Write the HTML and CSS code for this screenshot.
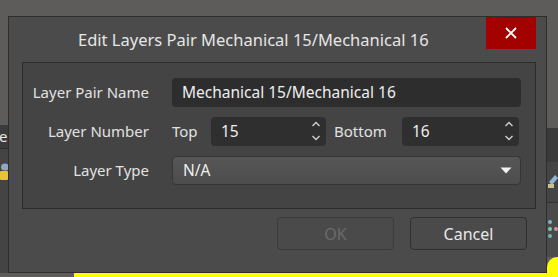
FILE: index.html
```html
<!DOCTYPE html>
<html lang="en">
<head>
    <meta charset="UTF-8">
    <meta name="viewport" content="width=device-width, initial-scale=1.0">
    <title>Edit Layers Pair</title>
    <link rel="stylesheet" href="styles.css">
</head>
<body>

    <div class="scene">
        <!-- Background app, left edge -->
        <div class="side side-left">
            <div class="side-tab">e</div>
            <div class="side-icon">
                <svg width="8" height="18" viewBox="0 0 8 18">
                    <ellipse cx="5" cy="4" rx="4" ry="3.5" fill="#8fa6bd"/>
                    <rect x="0" y="8" width="8" height="9" rx="1" fill="#e8c33a"/>
                </svg>
            </div>
        </div>

        <!-- Dialog -->
        <div class="dialog">
            <div class="titlebar">
                <span class="title">Edit Layers Pair Mechanical 15/Mechanical 16</span>
                <button type="button" class="close-btn" aria-label="Close">
                    <svg width="12" height="12" viewBox="0 0 12 12">
                        <path d="M1 1 L11 11 M11 1 L1 11" stroke="#fff" stroke-width="1.8"/>
                    </svg>
                </button>
            </div>

            <div class="group">
                <div class="row">
                    <label class="label">Layer Pair Name</label>
                    <div class="field wide">Mechanical 15/Mechanical 16</div>
                </div>

                <div class="row">
                    <label class="label">Layer Number</label>
                    <span class="sublabel sub-top">Top</span>
                    <div class="field spin spin-top">
                        <span>15</span>
                        <span class="arrows">
                            <svg width="10" height="22" viewBox="0 0 10 22">
                                <path d="M1.5 6 L5 2.5 L8.5 6 M1.5 16 L5 19.5 L8.5 16" fill="none" stroke="#cfcfcf" stroke-width="1.4"/>
                            </svg>
                        </span>
                    </div>
                    <span class="sublabel sub-bottom">Bottom</span>
                    <div class="field spin spin-bottom">
                        <span>16</span>
                        <span class="arrows">
                            <svg width="10" height="22" viewBox="0 0 10 22">
                                <path d="M1.5 6 L5 2.5 L8.5 6 M1.5 16 L5 19.5 L8.5 16" fill="none" stroke="#cfcfcf" stroke-width="1.4"/>
                            </svg>
                        </span>
                    </div>
                </div>

                <div class="row">
                    <label class="label">Layer Type</label>
                    <div class="field combo wide">
                        <span>N/A</span>
                        <svg width="12" height="7" viewBox="0 0 12 7">
                            <path d="M0.5 0.5 L11.5 0.5 L6 6.5 Z" fill="#f2f2f2"/>
                        </svg>
                    </div>
                </div>
            </div>

            <div class="buttons">
                <button type="button" class="btn" disabled>OK</button>
                <button type="button" class="btn">Cancel</button>
            </div>
        </div>

        <!-- Background app, right edge -->
        <div class="side side-right">
            <div class="side-dark"></div>
            <div class="side-tool">
                <svg width="11" height="16" viewBox="0 0 11 16">
                    <path d="M2 9 L8 2 L11 5 L5 12 Z" fill="#8fb3d6"/>
                    <rect x="1" y="11" width="6" height="4" fill="#c9c28a"/>
                </svg>
            </div>
            <div class="side-dots">
                <svg width="11" height="22" viewBox="0 0 11 22">
                    <circle cx="3" cy="4" r="2" fill="#7fb8c9"/>
                    <circle cx="3" cy="11" r="2" fill="#7fc9b0"/>
                    <circle cx="3" cy="18" r="2" fill="#6fb5a8"/>
                    <circle cx="9" cy="11" r="2" fill="#d48fa8"/>
                </svg>
            </div>
            <div class="side-yellow"></div>
        </div>

        <div class="bottom-strip"></div>
    </div>

</body>
</html>
```

FILE: styles.css
```css
* {
    box-sizing: border-box;
    font-family: "Noto Sans", "Open Sans", sans-serif;
}

body {
    margin: 0;
    background: #5d5c5b;
    width: 558px;
    height: 277px;
    overflow: hidden;
}

.scene {
    display: grid;
    grid-template-columns: 8px 539px 11px;
    grid-template-rows: 16px 257px 4px;
    height: 277px;
}

/* background app edges */
.side {
    grid-row: 1 / 3;
    display: flex;
    flex-direction: column;
}

.side-left {
    grid-column: 1;
    padding-top: 125px;
}

.side-tab {
    height: 24px;
    background: #3b3b3b;
    border-bottom: 1px solid #2c2c2c;
    color: #e8e8e8;
    font-size: 15px;
    line-height: 22px;
    overflow: hidden;
    text-indent: -1px;
}

.side-icon {
    flex: 1;
    background: #444;
    padding-top: 14px;
}

.side-right {
    grid-column: 3;
    padding-top: 128px;
}

.side-dark {
    height: 34px;
    background: #3a3a3a;
}

.side-tool {
    height: 41px;
    background: #444;
    padding-top: 10px;
    border-bottom: 1px solid #333;
}

.side-dots {
    flex: 1;
    background: #4a4a4a;
    padding-top: 15px;
}

.side-yellow {
    height: 16px;
    background: #ffff00;
    border-top-left-radius: 10px;
}

.bottom-strip {
    grid-column: 1 / 4;
    grid-row: 3;
    background: linear-gradient(to right, #5d5c5b 74px, #ffff00 74px);
}

/* dialog */
.dialog {
    grid-column: 2;
    grid-row: 2;
    background: #4b4b4b;
    border: 1px solid #2e2e2e;
    display: flex;
    flex-direction: column;
    padding: 0 10px 0 13px;
}

.titlebar {
    height: 45px;
    display: flex;
    align-items: flex-start;
    position: relative;
}

.title {
    flex: 1;
    color: #e6e6e6;
    font-size: 16.5px;
    line-height: 20px;
    padding-top: 13px;
    padding-left: 56px;
    white-space: nowrap;
}

.close-btn {
    position: absolute;
    right: 0;
    top: 0;
    width: 50px;
    height: 32px;
    background: #a30000;
    border: none;
    display: flex;
    align-items: center;
    justify-content: center;
    padding: 0;
}

.group {
    background: #444;
    border: 1px solid #2c2c2c;
    height: 147px;
    padding: 14px 14px 0 9px;
    display: flex;
    flex-direction: column;
    gap: 9px;
}

.row {
    display: flex;
    align-items: center;
    height: 30px;
}

.label {
    width: 117px;
    margin-right: 23px;
    text-align: right;
    color: #e2e2e2;
    font-size: 15px;
    white-space: nowrap;
}

.sublabel {
    color: #e2e2e2;
    font-size: 15px;
}

.sub-top {
    width: 39px;
}

.sub-bottom {
    margin-left: 8px;
    width: 68px;
}

.field {
    height: 29px;
    background: #2d2d2d;
    border-radius: 4px;
    color: #eeeeee;
    font-size: 15.5px;
    display: flex;
    align-items: center;
    padding-left: 10px;
}

.wide {
    flex: 1;
}

.spin {
    justify-content: space-between;
    padding-right: 5px;
    background: #2f2f2f;
}

.spin-top {
    width: 115px;
}

.spin-bottom {
    width: 117px;
}

.arrows {
    display: flex;
}

.combo {
    background: linear-gradient(#565656, #4d4d4d);
    border: 1px solid #363636;
    justify-content: space-between;
    padding-right: 8px;
}

.buttons {
    display: flex;
    justify-content: flex-end;
    gap: 16px;
    padding-top: 8px;
    padding-right: 9px;
}

.btn {
    width: 117px;
    height: 33px;
    background: #4a4a4a;
    border: 1px solid #2f2f2f;
    border-radius: 4px;
    color: #e8e8e8;
    font-size: 16px;
}

.btn:disabled {
    color: #6a6a6a;
    border-color: #3a3a3a;
}
```
